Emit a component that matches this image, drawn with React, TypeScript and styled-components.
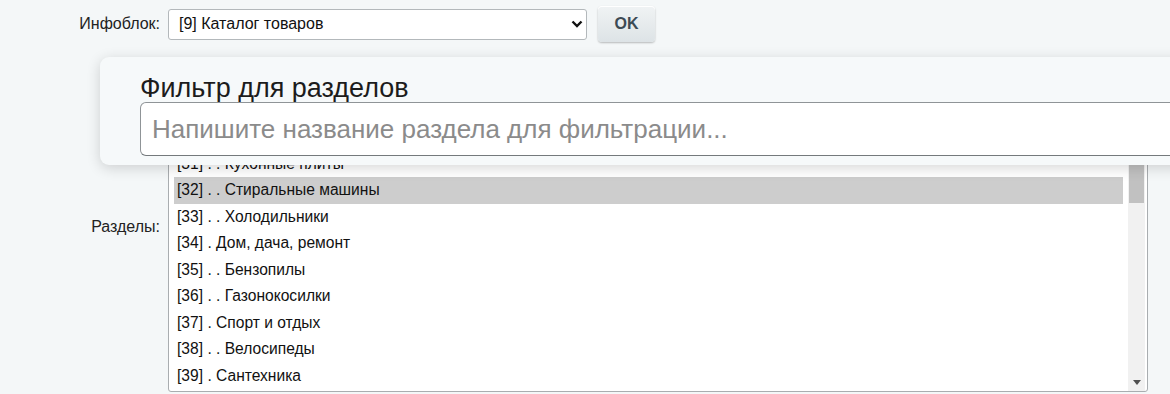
import React from "react";
import styled, { createGlobalStyle } from "styled-components";

const GlobalStyle = createGlobalStyle`
  html, body { margin: 0; padding: 0; }
  body {
    background: #f4f7f8;
    font-family: "Liberation Sans", Arial, sans-serif;
    color: #222;
  }
`;

const Page = styled.div`
  position: relative;
  width: 1170px;
  height: 394px;
  overflow: hidden;
`;

const Form = styled.div`
  display: grid;
  grid-template-columns: 160px 980px;
  column-gap: 8px;
  row-gap: 20px;
  padding-top: 6px;
`;

const Label = styled.div`
  text-align: right;
  align-self: center;
  font-size: 16px;
  color: #222;
  white-space: nowrap;
`;

const Field = styled.div`
  display: flex;
  align-items: center;
  gap: 11px;
`;

const SelectBox = styled.div`
  box-sizing: border-box;
  width: 419px;
  height: 31px;
  background: #fff;
  border: 1px solid #b3b8bb;
  border-radius: 3px;
  display: flex;
  align-items: center;
  justify-content: space-between;
  padding: 0 3px 0 10px;
  font-size: 16px;
  color: #111;
`;

const OkButton = styled.button`
  box-sizing: border-box;
  width: 57px;
  height: 36px;
  border: none;
  border-radius: 4px;
  background: linear-gradient(#f0f3f4, #dde3e6);
  box-shadow: 0 1px 2px rgba(0, 0, 0, 0.25), inset 0 1px 0 #fff;
  font-family: "Liberation Sans", Arial, sans-serif;
  font-weight: bold;
  font-size: 16px;
  color: #3c4a54;
`;

const ListBox = styled.div`
  box-sizing: border-box;
  height: 330px;
  background: #fff;
  border: 1px solid #a9adb0;
  border-radius: 3px;
  display: flex;
  overflow: hidden;
`;

const Rows = styled.div`
  flex: 1;
  padding: 8px 5px 0 5px;
`;

const Row = styled.div<{ $selected?: boolean }>`
  height: 26.5px;
  line-height: 26.5px;
  padding-left: 3px;
  font-size: 15.6px;
  color: #111;
  white-space: nowrap;
  background: ${(p) => (p.$selected ? "#cdcdcd" : "transparent")};
`;

const ScrollTrack = styled.div`
  width: 17px;
  margin-right: 2px;
  background: #f1f1f1;
  display: flex;
  flex-direction: column;
  align-items: center;
  padding: 50px 0 6px;
  box-sizing: border-box;
`;

const Thumb = styled.div`
  width: 15px;
  height: 90px;
  background: #c1c1c1;
`;

const Spacer = styled.div`
  flex: 1;
`;

const Popup = styled.div`
  position: absolute;
  left: 100px;
  top: 57px;
  width: 1120px;
  height: 108px;
  box-sizing: border-box;
  padding: 17px 0 0 40px;
  background: #f6f9fa;
  border-radius: 9px;
  box-shadow: 0 3px 14px rgba(0, 0, 0, 0.16);
`;

const PopupTitle = styled.div`
  font-family: "Liberation Sans", Arial, sans-serif;
  font-size: 27px;
  line-height: 28px;
  color: #1c1c1c;
  white-space: nowrap;
`;

const FilterInput = styled.input`
  box-sizing: border-box;
  width: 1100px;
  height: 54px;
  padding: 0 11px;
  border: 1px solid #8f9497;
  border-bottom-color: #74797c;
  border-radius: 6px;
  background: #fff;
  font-family: "Liberation Sans", Arial, sans-serif;
  font-size: 26px;
  color: #222;
  outline: none;
  &::placeholder {
    color: #8b8b8b;
  }
`;

const items: [number, string][] = [
  [28, ". Бытовая техника"],
  [29, ". . Микроволновые печи"],
  [30, ". . Посудомоечные машины"],
  [31, ". . Кухонные плиты"],
  [32, ". . Стиральные машины"],
  [33, ". . Холодильники"],
  [34, ". Дом, дача, ремонт"],
  [35, ". . Бензопилы"],
  [36, ". . Газонокосилки"],
  [37, ". Спорт и отдых"],
  [38, ". . Велосипеды"],
  [39, ". Сантехника"],
];

const Chevron = () => (
  <svg width="12" height="8" viewBox="0 0 12 8">
    <path d="M1.5 1.5 L6 6 L10.5 1.5" fill="none" stroke="#111" strokeWidth="2.4" />
  </svg>
);

const DownArrow = () => (
  <svg width="8" height="5" viewBox="0 0 8 5">
    <path d="M0 0 H8 L4 5 Z" fill="#505050" />
  </svg>
);

export default function App() {
  return (
    <Page>
      <GlobalStyle />
      <Form>
        <Label>Инфоблок:</Label>
        <Field>
          <SelectBox>
            <span>[9] Каталог товаров</span>
            <Chevron />
          </SelectBox>
          <OkButton>OK</OkButton>
        </Field>
        <Label>Разделы:</Label>
        <ListBox>
          <Rows>
            {items.map(([id, name]) => (
              <Row key={id} $selected={id === 32}>
                [{id}] {name}
              </Row>
            ))}
          </Rows>
          <ScrollTrack>
            <Thumb />
            <Spacer />
            <DownArrow />
          </ScrollTrack>
        </ListBox>
      </Form>
      <Popup>
        <PopupTitle>Фильтр для разделов</PopupTitle>
        <FilterInput placeholder="Напишите название раздела для фильтрации..." />
      </Popup>
    </Page>
  );
}
